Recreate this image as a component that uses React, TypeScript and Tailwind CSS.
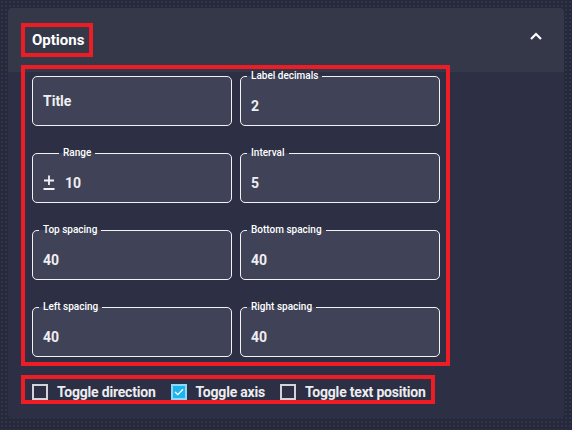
import type { ReactNode } from 'react'

// Accordion-style options panel: header + 2-col field grid + checkbox row.

const FIELDS: { label?: string; value: string; adorn?: boolean }[] = [
  { value: 'Title' },
  { label: 'Label decimals', value: '2' },
  { label: 'Range', value: '10', adorn: true },
  { label: 'Interval', value: '5' },
  { label: 'Top spacing', value: '40' },
  { label: 'Bottom spacing', value: '40' },
  { label: 'Left spacing', value: '40' },
  { label: 'Right spacing', value: '40' },
]

const TOGGLES = [
  { label: 'Toggle direction', on: false },
  { label: 'Toggle axis', on: true },
  { label: 'Toggle text position', on: false },
]

function PlusMinus(): ReactNode {
  return (
    <svg width="12" height="16" viewBox="0 0 12 16" fill="none" className="mr-[10px] -mt-[2px]">
      <path d="M1 6.5h10M6 1.5v9.5M0.5 15h11" stroke="#f2f2f4" strokeWidth="1.8" />
    </svg>
  )
}

function Field(props: { label?: string; value: string; adorn?: boolean }): ReactNode {
  const { label, value, adorn } = props
  if (!label) {
    return (
      <div className="mt-[6px] h-[50px] rounded-[5px] border border-[#f2f2f4] bg-[#404357] flex items-center px-[10px] text-[14px] font-bold text-[#eeeef2]">
        {value}
      </div>
    )
  }
  return (
    <fieldset className="rounded-[5px] border border-[#f2f2f4] bg-[#404357] min-w-0">
      <legend className={`${adorn ? 'ml-[26px]' : 'ml-[6px]'} px-[4px] text-[10px] leading-[12px] font-medium text-white`}>
        {label}
      </legend>
      <div className="h-[43px] flex items-center px-[10px] pt-[5px] text-[14px] font-bold text-[#eeeef2]">
        {adorn && <PlusMinus />}
        {value}
      </div>
    </fieldset>
  )
}

function Check(props: { on: boolean }): ReactNode {
  if (props.on) {
    return (
      <span className="w-4 h-4 flex-shrink-0 border-2 border-[#8fd8f7] bg-[#1fb4f0] flex items-center justify-center">
        <svg width="10" height="8" viewBox="0 0 10 8" fill="none">
          <polyline points="1,4 3.8,6.6 9,1.2" stroke="#ffffff" strokeWidth="1.3" />
        </svg>
      </span>
    )
  }
  return <span className="w-4 h-4 flex-shrink-0 border-2 border-[#d3d4da]" />
}

export default function App() {
  return (
    <div
      className="w-[572px] h-[430px] p-2 bg-[#262939] bg-[radial-gradient(#30334a_1px,transparent_1px)] bg-[length:4px_4px]"
      style={{ fontFamily: 'Roboto, "Liberation Sans", sans-serif' }}
    >
      <div className="rounded-[4px] bg-[#2d2f44] pb-[14px]">
        {/* header */}
        <div className="h-[64px] rounded-t-[4px] bg-[#353849] flex items-center justify-between pl-[13px] pr-[22px]">
          <div className="h-[34px] flex items-center pl-[11px] pr-[9px] outline-4 -outline-offset-4 outline-[#ee1c25] text-[15px] font-bold text-white">
            Options
          </div>
          <svg width="12" height="8" viewBox="0 0 12 8" fill="none" className="mb-2">
            <polyline points="1,7 6,2 11,7" stroke="#ffffff" strokeWidth="2.2" />
          </svg>
        </div>

        {/* fields */}
        <div className="relative -mt-[7px] ml-[13px] w-[429px] pt-[5px] pl-[11px] pr-[10px] pb-[9px] outline-4 -outline-offset-4 outline-[#ee1c25]">
          <div className="grid grid-cols-2 gap-x-2 gap-y-[21px]">
            {FIELDS.map(f => (
              <Field key={f.value + (f.label || '')} label={f.label} value={f.value} adorn={f.adorn} />
            ))}
          </div>
        </div>

        {/* toggles */}
        <div className="mt-[9px] ml-[13px] w-fit h-[29px] flex items-start pt-[9px] pl-[11px] pr-[9px] outline-4 -outline-offset-4 outline-[#ee1c25]">
          {TOGGLES.map((t, i) => (
            <div key={t.label} className={`flex items-center gap-[9px] ${i > 0 ? 'ml-[15px]' : ''}`}>
              <Check on={t.on} />
              <span className="text-[14px] leading-4 font-bold tracking-[-0.2px] text-[#ececf0] whitespace-nowrap">{t.label}</span>
            </div>
          ))}
        </div>
      </div>
    </div>
  )
}
